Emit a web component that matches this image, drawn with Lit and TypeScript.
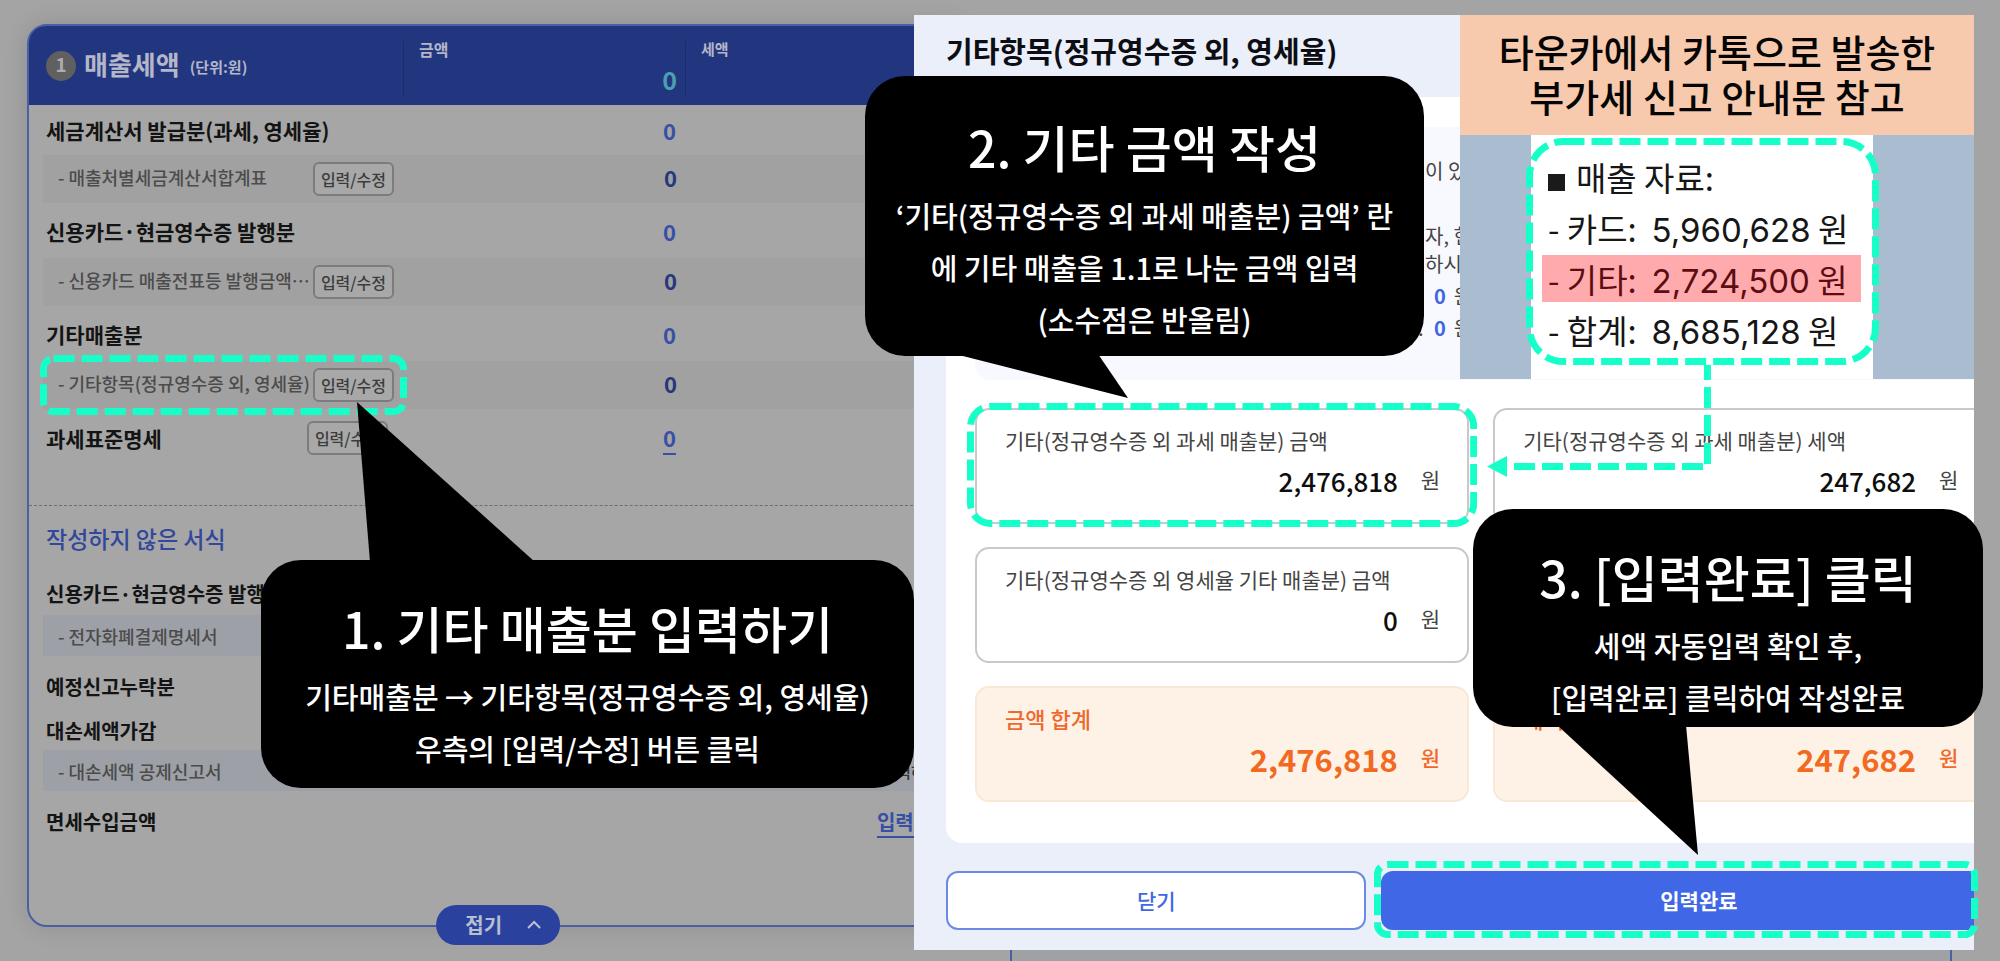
import { LitElement, html, css, svg, nothing } from "lit";
import { customElement, property } from "lit/decorators.js";

interface SheetRow {
  kind: "title" | "sub";
  size: string;
  label: string;
  button?: boolean;
  amount?: string;
  link?: boolean;
  marked?: boolean;
}

const WRITTEN: SheetRow[] = [
  { kind: "title", size: "h50", label: "세금계산서 발급분(과세, 영세율)", amount: "0" },
  { kind: "sub", size: "h48", label: "매출처별세금계산서합계표", button: true, amount: "0" },
  { kind: "title", size: "h55", label: "신용카드·현금영수증 발행분", amount: "0" },
  { kind: "sub", size: "h48", label: "신용카드 매출전표등 발행금액⋯", button: true, amount: "0" },
  { kind: "title", size: "h55", label: "기타매출분", amount: "0" },
  { kind: "sub", size: "h48", label: "기타항목(정규영수증 외, 영세율)", button: true, amount: "0", marked: true },
  { kind: "title", size: "h58", label: "과세표준명세", button: true, amount: "0", link: true },
];

const UNWRITTEN: { kind: string; size: string; label: string; action?: string }[] = [
  { kind: "title", size: "h42", label: "신용카드·현금영수증 발행분" },
  { kind: "sub", size: "h41", label: "전자화폐결제명세서", action: "text" },
  { kind: "title", size: "h55", label: "예정신고누락분" },
  { kind: "title", size: "h39", label: "대손세액가감" },
  { kind: "sub", size: "h41", label: "대손세액 공제신고서", action: "text" },
  { kind: "title", size: "h55", label: "면세수입금액", action: "link" },
];

/** Dashed outline drawn over whatever box it is placed in. */
@customElement("dash-frame")
class DashFrame extends LitElement {
  @property({ type: Number }) radius = 14;

  static styles = css`
    :host { display: block; pointer-events: none; }
    svg { display: block; width: 100%; height: 100%; }
    rect {
      width: calc(100% - 7px);
      height: calc(100% - 7px);
      fill: none;
      stroke: #17ffc8;
      stroke-width: 7;
      stroke-dasharray: 21 7;
    }
  `;

  render() {
    return html`<svg aria-hidden="true"><rect x="3.5" y="3.5" rx=${this.radius}></rect></svg>`;
  }
}

/** Black speech bubble with a title, a few lines and a pointed tail. */
@customElement("guide-callout")
class GuideCallout extends LitElement {
  @property() heading = "";
  @property({ attribute: false }) lines: string[] = [];
  @property() tail = "";

  static styles = css`
    :host {
      box-sizing: border-box;
      display: block;
      border-radius: 40px;
      background: #000;
      color: #fff;
      text-align: center;
      white-space: nowrap;
      padding: 32px 0 12px;
    }
    h2 { margin: 0; font-size: 50px; font-weight: 500; line-height: 70px; }
    p { margin: 0; font-size: 29px; font-weight: 500; line-height: 52px; }
    .lines { margin-top: 8px; }
    svg { position: absolute; left: 0; top: 0; width: 100%; height: 100%; overflow: visible; z-index: -1; }
  `;

  render() {
    return html`
      <svg aria-hidden="true"><polygon points=${this.tail} fill="#000"></polygon></svg>
      <h2>${this.heading}</h2>
      <div class="lines">${this.lines.map((l) => html`<p>${l}</p>`)}</div>
    `;
  }
}

/** Left page: the tax sheet behind the dialog. */
@customElement("tax-sheet")
class TaxSheet extends LitElement {
  static styles = css`
    :host {
      display: block;
      position: relative;
      box-sizing: border-box;
      border: 2px solid #4a60a4;
      border-radius: 20px;
      background: #a6a6a6;
      box-shadow: 0 0 24px rgba(0, 0, 0, 0.12);
      height: 903px;
    }
    header {
      display: grid;
      grid-template-columns: 360px 282px 1fr;
      padding: 15px 14px 8px;
      border-radius: 17px 17px 0 0;
      background: #223680;
      color: #b3b7c8;
    }
    .name { display: flex; align-items: center; gap: 8px; padding: 0 0 10px 3px; }
    .num {
      width: 30px; height: 30px; border-radius: 50%; margin-top: 4px;
      background: #606060; color: #adadad;
      font-size: 19px; font-weight: 700; line-height: 26px; text-align: center;
    }
    h1 { margin: 0; font-size: 26px; font-weight: 700; line-height: 30px; }
    .unit { font-size: 15px; font-weight: 700; line-height: 30px; padding: 6px 0 0 2px; }
    .col {
      height: 56px; box-sizing: border-box;
      border-left: 1px solid #1b2c6b;
      padding: 0 8px 4px 15px;
      display: flex; flex-direction: column; justify-content: space-between;
      font-size: 16px; font-weight: 700; line-height: 16px;
    }
    .col + .col { font-size: 15px; }
    .sum { align-self: flex-end; color: #4c9fb0; font-size: 25px; line-height: 28px; }
    table { width: calc(100% - 28px); margin: 0 14px; table-layout: fixed; border-collapse: collapse; }
    .c1 { width: 360px; }
    .c2 { width: 282px; }
    th, td { padding: 0; text-align: left; font-weight: 500; }
    .sub { background: #a1a1a1; }
    .later .sub { background: #9da0a6; }
    .cell { box-sizing: border-box; display: flex; align-items: center; justify-content: space-between; position: relative; padding: 0 9px 0 3px; }
    .title .cell { padding-right: 15px; }
    .later .h55 { padding-top: 7px; }
    .h39 { height: 39px; } .h41 { height: 41px; } .h42 { height: 42px; } .h48 { height: 48px; }
    .h50 { height: 50px; } .h55 { height: 55px; } .h58 { height: 58px; }
    .label { flex: 1; white-space: nowrap; color: #141414; font-size: 21px; line-height: 30px; font-weight: 700; }
    .later .label { font-size: 20px; }
    .sub .label, .later .sub .label { color: #4c4c4c; font-size: 18px; font-weight: 500; padding: 0 0 4px 12px; }
    .later .sub .label { padding-bottom: 0; }
    .label i { font-style: normal; padding-right: 4px; }
    .edit {
      box-sizing: border-box; height: 34px; padding: 0 6px;
      border: 2px solid #7c7c7c; border-radius: 6px; background: #a8a8a8;
      font: 500 16px/28px "Noto Sans CJK KR", sans-serif; color: #3c3c3c;
    }
    .amount { text-align: right; padding-right: 9px; font-size: 22px; line-height: 30px; font-weight: 700; color: #374fa5; }
    .sub .amount { color: #25377c; padding: 0 8px 4px 0; }
    a { color: #374fa5; text-decoration: none; border-bottom: 2px solid #374fa5; }
    .amount a { display: inline-block; line-height: 31px; }
    .mark { position: absolute; inset: -6px -4px -6px -3px; z-index: 1; }
    .later { margin-top: 38px; border-top: 1px dashed #6e6e6e; }
    h2 { margin: 0; padding: 15px 0 18px 17px; font-size: 23px; line-height: 34px; font-weight: 500; color: #33479b; }
    .action { text-align: right; padding-right: 3px; font-size: 20px; }
    .title .action { padding-top: 6px; font-weight: 700; }
    .sub .action { font-size: 16px; padding-right: 13px; color: #333; }
    .fold {
      position: absolute; left: 50%; bottom: -20px; transform: translateX(-50%);
      display: flex; align-items: center; gap: 24px;
      height: 40px; padding: 0 18px 0 29px; border: 0; border-radius: 20px;
      background: #2a429e; color: #b9bfd3;
      font: 700 20px/34px "Noto Sans CJK KR", sans-serif;
    }
  `;

  private written(r: SheetRow) {
    return html`<tr class=${r.kind}>
      <th scope="row">
        <div class="cell ${r.size}">
          <span class="label">${r.kind === "sub" ? html`<i>-</i>` : nothing}${r.label}</span>
          ${r.button ? html`<button class="edit" type="button">입력/수정</button>` : nothing}
          ${r.marked ? html`<dash-frame class="mark" radius="10"></dash-frame>` : nothing}
        </div>
      </th>
      <td class="amount">${r.link ? html`<a href="#">${r.amount}</a>` : r.amount}</td>
      <td></td>
    </tr>`;
  }

  render() {
    return html`
      <header>
        <div class="name"><span class="num">1</span><h1>매출세액</h1><span class="unit">(단위:원)</span></div>
        <div class="col"><span>금액</span><span class="sum">0</span></div>
        <div class="col"><span>세액</span></div>
      </header>
      <table>
        <colgroup><col class="c1" /><col class="c2" /><col /></colgroup>
        <tbody>${WRITTEN.map((r) => this.written(r))}</tbody>
      </table>
      <section class="later">
        <h2>작성하지 않은 서식</h2>
        <table>
          <colgroup><col class="c1" /><col class="c2" /><col /></colgroup>
          <tbody>
            ${UNWRITTEN.map(
              (r) => html`<tr class=${r.kind}>
                <th scope="row"><div class="cell ${r.size}"><span class="label">${r.kind === "sub" ? html`<i>-</i>` : nothing}${r.label}</span></div></th>
                <td></td>
                <td class="action">${r.action === "link" ? html`<a href="#">입력하기</a>` : r.action ? "입력하기" : nothing}</td>
              </tr>`
            )}
          </tbody>
        </table>
      </section>
      <button class="fold" type="button">접기
        <svg width="16" height="10" viewBox="0 0 16 10" fill="none" stroke="#b9bfd3" stroke-width="2"><path d="M2 8 8 2l6 6" /></svg>
      </button>
    `;
  }
}

/** Dialog with the amount form and the memo laid over its corner. */
@customElement("amount-dialog")
class AmountDialog extends LitElement {
  static styles = css`
    :host { display: block; }
    .clip { position: relative; overflow: hidden; background: #eaeff9; }
    .inner { width: 104%; box-sizing: border-box; padding: 0 0 20px 32px; }
    h2 { margin: 0; width: max-content; font-size: 29px; font-weight: 700; line-height: 70px; height: 82px; color: #0c0e14; }
    .panel { background: #fff; border-radius: 0 0 16px 16px; padding: 30px 29px 41px; }
    .info {
      box-sizing: border-box; height: 253px; border-radius: 16px; background: #f7f9fe;
      padding: 30px 0 0 450px; font-size: 20px; line-height: 28px; color: #444; white-space: nowrap;
    }
    .info p { margin: 0 0 4px; }
    .info .first { margin-bottom: 37px; }
    .info .tight { margin: 0; }
    .info b { color: #3f66e0; font-weight: 700; padding-right: 8px; }
    .info .zero { padding-left: 9px; }
    .info .colon { margin-left: -7px; padding-right: 6px; }
    .fields { display: grid; grid-template-columns: 1fr 1fr; gap: 23px 24px; margin-top: 28px; }
    .field {
      position: relative; box-sizing: border-box; height: 116px;
      border: 2px solid #c9c9c9; border-radius: 14px; background: #fff; padding: 16px 27px 0 28px;
    }
    .field label { display: block; font-size: 21px; line-height: 28px; color: #444; }
    .value { display: flex; align-items: center; gap: 23px; margin-top: 7px; height: 40px; }
    .value input, .value output {
      flex: 1; min-width: 0; box-sizing: border-box; border: 0; padding: 0; background: none; text-align: right;
      font: 500 26px/40px "Noto Sans CJK KR", sans-serif; color: #0e0e0e;
    }
    .value span { font-size: 21px; line-height: 36px; padding-bottom: 4px; color: #444; }
    .total { background: #fef2e6; border-color: #fae8d7; }
    .total label { font-size: 22px; font-weight: 500; color: #f0682c; }
    .total .value output { font-size: 31px; font-weight: 700; color: #f26a22; }
    .total .value span { color: #f0682c; font-weight: 500; }
    .mark { position: absolute; inset: -7px -10px -5px; }
    .actions { display: flex; gap: 15px; margin-top: 28px; }
    .actions button {
      height: 59px; box-sizing: border-box; padding: 0 0 2px; border: 2px solid #6b8ae6; border-radius: 12px; background: #fff; color: #4068e2;
      font: 500 21px/30px "Noto Sans CJK KR", sans-serif;
    }
    .actions .close { flex: 33 1 0; }
    .actions .done { flex: 50 1 0; background: #4068e6; border-color: #4068e6; color: #fff; font-weight: 700; }
    .donemark { position: absolute; left: 460px; right: -4px; bottom: 12px; height: 77px; }
    .memo { position: absolute; top: 0; right: 0; width: 514px; }
    .memo h3 {
      margin: 0; height: 120px; box-sizing: border-box; padding-top: 13px; background: #f8caad; color: #050505;
      font-size: 38px; font-weight: 500; line-height: 45px; text-align: center; white-space: nowrap;
    }
    .strip { background: #aabccf; padding: 0 101px 0 71px; }
    .paper { position: relative; box-sizing: border-box; height: 244px; background: #fff; padding: 18px 12px 0 11px; }
    .paper p {
      margin: 0 0 4px; height: 47px; padding-left: 6px; white-space: pre;
      font-size: 33px; line-height: 49px; color: #161616;
    }
    .paper b { font-family: Inter, sans-serif; font-weight: 400; }
    .paper .pick { background: #ffabae; color: #5c0d12; }
    .square { display: inline-block; width: 17px; height: 17px; margin-right: 11px; background: #1a1a1a; }
    .memomark { position: absolute; inset: 3px -6px 14px -5px; }
    .link { position: absolute; right: 263px; top: 350px; }
  `;

  private field(id: string, label: string, value: string, marked = false) {
    return html`<div class="field">
      <label for=${id}>${label}</label>
      <div class="value"><input id=${id} type="text" .value=${value} /><span>원</span></div>
      ${marked ? html`<dash-frame class="mark" radius="20"></dash-frame>` : nothing}
    </div>`;
  }

  private total(id: string, label: string, value: string) {
    return html`<div class="field total">
      <label for=${id}>${label}</label>
      <div class="value"><output id=${id}>${value}</output><span>원</span></div>
    </div>`;
  }

  render() {
    return html`
      <div class="clip">
        <div class="inner">
          <h2>기타항목(정규영수증 외, 영세율)</h2>
          <div class="panel">
            <div class="info">
              <p class="first">이 있는 경우</p>
              <p class="tight">자, 현금</p>
              <p>하시기</p>
              <p><span class="zero"></span><b>0</b>원</p>
              <p><span class="colon">:</span> <b>0</b>원</p>
            </div>
            <div class="fields">
              ${this.field("a1", "기타(정규영수증 외 과세 매출분) 금액", "2,476,818", true)}
              ${this.field("a2", "기타(정규영수증 외 과세 매출분) 세액", "247,682")}
              ${this.field("b1", "기타(정규영수증 외 영세율 기타 매출분) 금액", "0")}
              <div></div>
              ${this.total("t1", "금액 합계", "2,476,818")}
              ${this.total("t2", "세액 합계", "247,682")}
            </div>
          </div>
          <div class="actions">
            <button class="close" type="button">닫기</button>
            <button class="done" type="button">입력완료</button>
          </div>
        </div>
        <aside class="memo">
          <h3>타운카에서 카톡으로 발송한<br />부가세 신고 안내문 참고</h3>
          <div class="strip">
            <div class="paper">
              <p><span class="square"></span>매출 자료:</p>
              <p>- 카드:  <b>5,960,628</b> 원</p>
              <p class="pick">- 기타:  <b>2,724,500</b> 원</p>
              <p>- 합계:  <b>8,685,128</b> 원</p>
              <dash-frame class="memomark" radius="34"></dash-frame>
            </div>
          </div>
        </aside>
      </div>
      <svg class="link" width="224" height="112" aria-hidden="true">
        ${svg`<path d="M220.500 -6V100" fill="none" stroke="#17ffc8" stroke-width="7" stroke-dasharray="21 7"></path>
        <path d="M216 101.500H26" fill="none" stroke="#17ffc8" stroke-width="7" stroke-dasharray="21 7"></path>
        <path d="M0 101.500 20 91v21z" fill="#17ffc8"></path>`}
      </svg>
      <dash-frame class="donemark" radius="10"></dash-frame>
    `;
  }
}

@customElement("app-root")
class AppRoot extends LitElement {
  static styles = css`
    :host {
      display: block; position: relative; box-sizing: border-box; height: 100vh; overflow: hidden;
      background: #a4a4a4; font-family: "Noto Sans CJK KR", sans-serif;
    }
    .sheets { display: grid; grid-template-columns: 1fr 1fr; gap: 40px; padding: 24px 48px 0 27px; }
    .next { border: 2px solid #4a60a4; border-radius: 20px; background: #a0a1a4; height: 960px; }
    .dialog { position: absolute; top: 15px; left: 914px; right: 26px; }
    .callout { position: absolute; z-index: 2; }
    .one { left: 261px; top: 560px; width: 653px; height: 228px; }
    .two { left: 865px; top: 76px; width: 559px; height: 280px; padding-top: 35px; }
    .three { left: 1473px; top: 509px; width: 510px; height: 218px; }
  `;

  render() {
    return html`
      <main class="sheets"><tax-sheet></tax-sheet><div class="next"></div></main>
      <amount-dialog class="dialog" role="dialog"></amount-dialog>
      <guide-callout class="callout one" heading="1. 기타 매출분 입력하기"
        .lines=${["기타매출분 → 기타항목(정규영수증 외, 영세율)", "우측의 [입력/수정] 버튼 클릭"]}
        tail="96,-158 109,2 274,2"></guide-callout>
      <guide-callout class="callout two" heading="2. 기타 금액 작성"
        .lines=${["‘기타(정규영수증 외 과세 매출분) 금액’ 란", "에 기타 매출을 1.1로 나눈 금액 입력", "(소수점은 반올림)"]}
        tail="90,278 233,278 263,322"></guide-callout>
      <guide-callout class="callout three" heading="3. [입력완료] 클릭"
        .lines=${["세액 자동입력 확인 후,", "[입력완료] 클릭하여 작성완료"]}
        tail="84,216 213,216 225,346"></guide-callout>
    `;
  }
}
